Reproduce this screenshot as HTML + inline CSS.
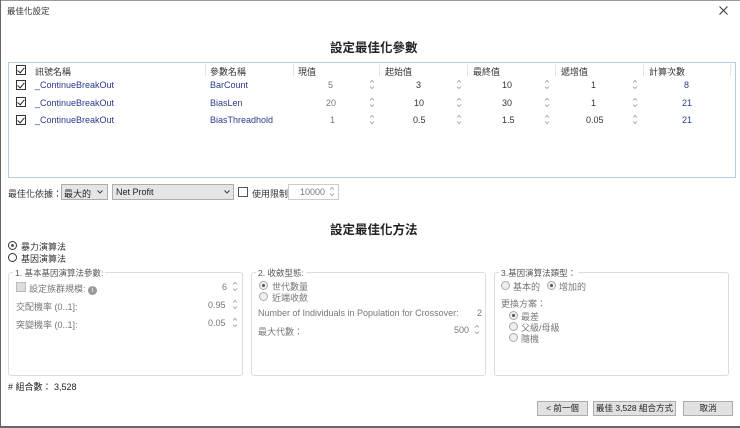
<!DOCTYPE html>
<html><head><meta charset="utf-8"><style>
*{box-sizing:border-box;margin:0;padding:0}
body{width:740px;height:428px;background:#fff;font-family:"Liberation Sans","Noto Sans CJK TC",sans-serif;font-size:9px;color:#333;position:relative;overflow:hidden}
.a{position:absolute;white-space:nowrap}
.cb{position:absolute;width:10px;height:10px;border:1px solid #333;background:#fff}
.cb.k::after{content:"";position:absolute;left:2px;top:0px;width:3px;height:6px;border:solid #222;border-width:0 1.5px 1.5px 0;transform:rotate(40deg)}
.blue{color:#2b3a8f}
.sp{position:absolute;width:6px;height:11px}
.sep{position:absolute;top:64px;width:1px;height:12px;background:#e3e3e3}
.grp{position:absolute;top:272px;height:104px;border:1px solid #dcdcdc;border-radius:3px}
.gt{position:absolute;top:-6px;left:4px;background:#fff;padding:0 2px;color:#555;font-size:8.5px}
.rad{position:absolute;width:9px;height:9px;border:1px solid #aaa;border-radius:50%;background:#eee}
.rad.on::after{content:"";position:absolute;left:2px;top:2px;width:3px;height:3px;border-radius:50%;background:#555}
.btn{position:absolute;top:401px;height:15px;border:1px solid #adadad;background:#e1e1e1;text-align:center;line-height:13px;font-size:8.5px;color:#222}
.g{color:#777}
</style></head><body>
<svg width="0" height="0" style="position:absolute"><defs><symbol id="s" viewBox="0 0 6 11"><path d="M1 3.5L3 1.5L5 3.5M1 7.5L3 9.5L5 7.5" fill="none" stroke="#999" stroke-width="0.8"/></symbol></defs></svg>
<div style="position:absolute;left:0;top:0;width:740px;height:1px;background:#999"></div>
<div style="position:absolute;left:0;top:426px;width:740px;height:2px;background:#666"></div>
<div style="position:absolute;left:0;top:0;width:1px;height:428px;background:#666"></div>
<div class="a" style="left:7px;top:5px;font-size:8.5px">最佳化設定</div>
<svg style="position:absolute;left:719px;top:6px" width="9" height="9"><path d="M0.5 0.5L8.5 8.5M8.5 0.5L0.5 8.5" stroke="#333" stroke-width="1"/></svg>
<div class="a" style="left:330px;top:37px;font-size:12.5px;font-weight:bold;color:#222">設定最佳化參數</div>
<div style="position:absolute;left:8px;top:62px;width:728px;height:116px;border:1px solid #b5cde0"></div>
<div class="sep" style="left:205px"></div><div class="sep" style="left:293px"></div><div class="sep" style="left:379px"></div><div class="sep" style="left:467px"></div><div class="sep" style="left:555px"></div><div class="sep" style="left:643px"></div><div class="sep" style="left:730px"></div>
<div class="cb k" style="left:16px;top:65px"></div>
<div class="a" style="left:35px;top:65px">訊號名稱</div>
<div class="a" style="left:210px;top:65px">參數名稱</div>
<div class="a" style="left:298px;top:65px">現值</div>
<div class="a" style="left:385px;top:65px">起始值</div>
<div class="a" style="left:473px;top:65px">最終值</div>
<div class="a" style="left:561px;top:65px">遞增值</div>
<div class="a" style="left:649px;top:65px">計算次數</div>

<div class="cb k" style="left:16px;top:80px"></div><div class="a blue" style="left:35px;top:80px">_ContinueBreakOut</div><div class="a blue" style="left:210px;top:80px">BarCount</div>
<div class="a g" style="left:328px;top:80px">5</div><div class="a" style="left:416px;top:80px">3</div><div class="a" style="left:502px;top:80px">10</div><div class="a" style="left:591px;top:80px">1</div><div class="a blue" style="left:684px;top:80px">8</div>
<div class="cb k" style="left:16px;top:97px"></div><div class="a blue" style="left:35px;top:98px">_ContinueBreakOut</div><div class="a blue" style="left:210px;top:98px">BiasLen</div>
<div class="a g" style="left:326px;top:98px">20</div><div class="a" style="left:414px;top:98px">10</div><div class="a" style="left:502px;top:98px">30</div><div class="a" style="left:591px;top:98px">1</div><div class="a blue" style="left:682px;top:98px">21</div>
<div class="cb k" style="left:16px;top:115px"></div><div class="a blue" style="left:35px;top:115px">_ContinueBreakOut</div><div class="a blue" style="left:210px;top:115px">BiasThreadhold</div>
<div class="a g" style="left:330px;top:115px">1</div><div class="a" style="left:413px;top:115px">0.5</div><div class="a" style="left:502px;top:115px">1.5</div><div class="a" style="left:586px;top:115px">0.05</div><div class="a blue" style="left:682px;top:115px">21</div>

<svg class="sp" style="left:369px;top:79px"><use href="#s"/></svg><svg class="sp" style="left:456px;top:79px"><use href="#s"/></svg><svg class="sp" style="left:544px;top:79px"><use href="#s"/></svg><svg class="sp" style="left:632px;top:79px"><use href="#s"/></svg>
<svg class="sp" style="left:369px;top:97px"><use href="#s"/></svg><svg class="sp" style="left:456px;top:97px"><use href="#s"/></svg><svg class="sp" style="left:544px;top:97px"><use href="#s"/></svg><svg class="sp" style="left:632px;top:97px"><use href="#s"/></svg>
<svg class="sp" style="left:369px;top:114px"><use href="#s"/></svg><svg class="sp" style="left:456px;top:114px"><use href="#s"/></svg><svg class="sp" style="left:544px;top:114px"><use href="#s"/></svg><svg class="sp" style="left:632px;top:114px"><use href="#s"/></svg>

<div class="a" style="left:8px;top:187px">最佳化依據：</div>
<div style="position:absolute;left:61px;top:184px;width:47px;height:16px;border:1px solid #adadad;background:#e5e5e5"></div>
<div class="a" style="left:64px;top:187px;color:#222">最大的</div>
<svg style="position:absolute;left:97px;top:190px" width="6" height="4"><path d="M0.5 0.5L3 3L5.5 0.5" fill="none" stroke="#444"/></svg>
<div style="position:absolute;left:112px;top:184px;width:122px;height:16px;border:1px solid #adadad;background:#e5e5e5"></div>
<div class="a" style="left:116px;top:187px;color:#222">Net Profit</div>
<svg style="position:absolute;left:224px;top:190px" width="6" height="4"><path d="M0.5 0.5L3 3L5.5 0.5" fill="none" stroke="#444"/></svg>
<div class="cb" style="left:238px;top:187px;border-color:#555"></div>
<div class="a" style="left:252px;top:187px">使用限制</div>
<div style="position:absolute;left:288px;top:184px;width:51px;height:16px;border:1px solid #ccc"></div>
<div class="a g" style="left:300px;top:187px">10000</div><svg class="sp" style="left:329px;top:186px"><use href="#s"/></svg>

<div class="a" style="left:330px;top:219px;font-size:12.5px;font-weight:bold;color:#222">設定最佳化方法</div>
<div class="rad on" style="left:8px;top:241px;border-color:#333;background:#fff"></div><div class="a" style="left:21px;top:240px">暴力演算法</div>
<div class="rad" style="left:8px;top:253px;border-color:#333;background:#fff"></div><div class="a" style="left:21px;top:252px">基因演算法</div>

<div class="grp" style="left:8px;width:235px"><div class="gt">1. 基本基因演算法參數:</div></div>
<div style="position:absolute;left:16px;top:282px;width:10px;height:10px;border:1px solid #bbb;background:#ddd"></div>
<div class="a g" style="left:29px;top:282px">設定族群規模: <span style="display:inline-block;width:9px;height:9px;border-radius:50%;background:#999;color:#fff;font-size:7px;text-align:center;line-height:9px">i</span></div>
<div class="a g" style="left:222px;top:282px">6</div><svg class="sp" style="left:232px;top:281px"><use href="#s"/></svg>
<div class="a g" style="left:16px;top:300px">交配機率 (0..1]:</div><div class="a g" style="left:208px;top:300px">0.95</div><svg class="sp" style="left:232px;top:299px"><use href="#s"/></svg>
<div class="a g" style="left:16px;top:318px">突變機率 (0..1]:</div><div class="a g" style="left:208px;top:318px">0.05</div><svg class="sp" style="left:232px;top:317px"><use href="#s"/></svg>

<div class="grp" style="left:251px;width:235px"><div class="gt">2. 收斂型態:</div></div>
<div class="rad on" style="left:259px;top:281px"></div><div class="a g" style="left:272px;top:280px">世代數量</div>
<div class="rad" style="left:259px;top:292px"></div><div class="a g" style="left:272px;top:291px">近端收斂</div>
<div class="a g" style="left:258px;top:308px">Number of Individuals in Population for Crossover:</div><div class="a g" style="left:477px;top:308px">2</div>
<div class="a g" style="left:258px;top:325px">最大代數：</div><div class="a g" style="left:454px;top:325px">500</div><svg class="sp" style="left:474px;top:324px"><use href="#s"/></svg>

<div class="grp" style="left:494px;width:235px"><div class="gt">3.基因演算法類型：</div></div>
<div class="rad" style="left:501px;top:281px"></div><div class="a g" style="left:513px;top:280px">基本的</div>
<div class="rad on" style="left:547px;top:281px"></div><div class="a g" style="left:559px;top:280px">增加的</div>
<div class="a g" style="left:501px;top:297px">更換方案：</div>
<div class="rad on" style="left:509px;top:311px"></div><div class="a g" style="left:521px;top:310px">最差</div>
<div class="rad" style="left:509px;top:322px"></div><div class="a g" style="left:521px;top:321px">父級/母級</div>
<div class="rad" style="left:509px;top:333px"></div><div class="a g" style="left:521px;top:332px">隨機</div>

<div class="a" style="left:8px;top:380px;color:#222"># 組合數： 3,528</div>
<div class="btn" style="left:537px;width:51px">&lt; 前一個</div>
<div class="btn" style="left:593px;width:83px">最佳 3,528 組合方式</div>
<div class="btn" style="left:683px;width:50px">取消</div>
</body></html>
